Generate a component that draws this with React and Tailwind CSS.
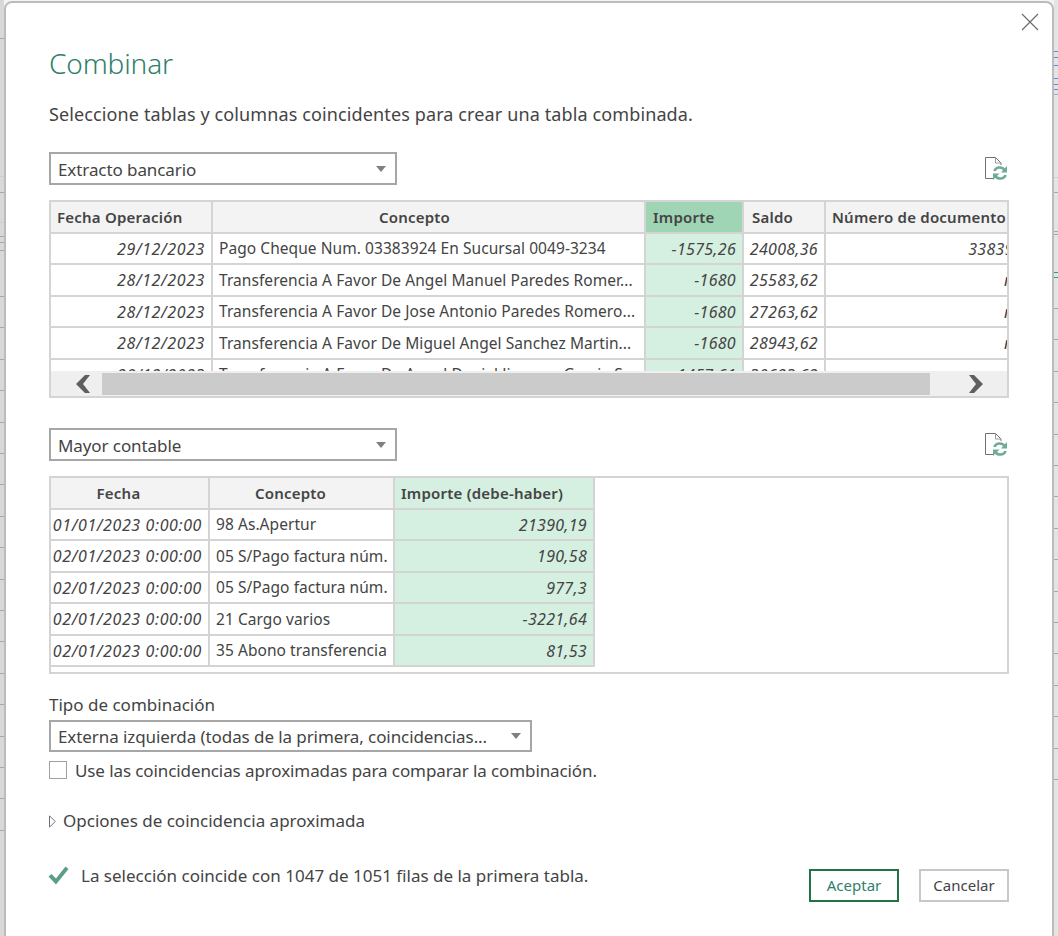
const table1 = {
  cols: 'grid-cols-[160px_431px_96px_80px_212px]',
  headPad: 'pr-[34px]',
  head: ['Fecha Operación', 'Concepto', 'Importe', 'Saldo', 'Número de documento'],
  headAlign: ['justify-start', 'justify-center', 'justify-start pl-[7px]', 'justify-start pl-[8px]', 'justify-start'],
  rows: [
    ['29/12/2023', 'Pago Cheque Num. 03383924 En Sucursal 0049-3234', '-1575,26', '24008,36', '3383924'],
    ['28/12/2023', 'Transferencia A Favor De Angel Manuel Paredes Romer...', '-1680', '25583,62', 'null'],
    ['28/12/2023', 'Transferencia A Favor De Jose Antonio Paredes Romero...', '-1680', '27263,62', 'null'],
    ['28/12/2023', 'Transferencia A Favor De Miguel Angel Sanchez Martin...', '-1680', '28943,62', 'null'],
    ['28/12/2023', 'Transferencia A Favor De Angel Daniel Jimenez Garcia S', '-1457,61', '30623,62', 'null'],
  ],
}

const table2 = {
  cols: 'grid-cols-[157px_183px_198px]',
  headPad: 'pr-[28px]',
  head: ['Fecha', 'Concepto', 'Importe (debe-haber)'],
  headAlign: ['justify-center', 'justify-center', 'justify-start'],
  rows: [
    ['01/01/2023 0:00:00', '98 As.Apertur', '21390,19'],
    ['02/01/2023 0:00:00', '05 S/Pago factura núm.', '190,58'],
    ['02/01/2023 0:00:00', '05 S/Pago factura núm.', '977,3'],
    ['02/01/2023 0:00:00', '21 Cargo varios', '-3221,64'],
    ['02/01/2023 0:00:00', '35 Abono transferencia', '81,53'],
  ],
}

// the spreadsheet that shows behind the dialog, only a sliver on each side
const gray = 'border-[#a8a8a8]'
const blue = 'border-[#5b8fc7]'
const leftLines = [
  [39, gray], [138, 'border-[#cccccc]'], [16, gray], [30, 'border-[#d0d0d0]'], [14, gray], [6, gray], [8, gray], [46, gray],
  [31, gray], [32, gray], [31, gray], [32, gray], [31, gray], [31, gray], [32, gray], [31, gray], [32, gray], [31, gray], [31, gray], [32, gray], [31, gray], [32, gray], [31, gray], [31, gray], [32, gray],
]
const rightLines = [
  [52, blue], [6, blue], [8, blue], [13, blue], [6, blue], [5, blue], [5, gray], [83, 'border-[#d0d0d0]'], [15, gray], [39, gray], [3, gray], [38, 'border-[#1fa08c]'], [5, 'border-[#1fa08c]'],
  [31, gray], [31, gray], [32, gray], [31, gray], [32, gray], [31, gray], [31, gray], [32, gray], [31, gray], [32, gray], [31, gray], [31, gray], [32, gray], [31, gray], [32, gray], [31, gray],
]

function Strip({ lines, className }) {
  return (
    <div className={`flex w-[4px] shrink-0 flex-col ${className}`}>
      {lines.map(([h, color], i) => (
        <div key={i} className={`shrink-0 border-b ${color}`} style={{ height: h }} />
      ))}
    </div>
  )
}

function Dropdown({ label, className }) {
  return (
    <div className={`flex items-center justify-between border-2 border-[#a6a6a6] bg-white pl-[7px] pr-[9px] ${className}`}>
      <span className="whitespace-nowrap pt-[2px] text-[17px] tracking-[-0.005em]">{label}</span>
      <span className="h-0 w-0 border-x-[5px] border-t-[6px] border-x-transparent border-t-[#808080]" />
    </div>
  )
}

function RefreshFile() {
  return (
    <svg width="24" height="26" viewBox="0 0 24 26" fill="none" className="mr-[1px]">
      <path d="M9 22.5H1.5V1.5H11.5L17 7V9" stroke="#707070" strokeWidth="1" />
      <path d="M11.5 1.5V7H17" stroke="#9a9a9a" strokeWidth="1" />
      <path d="M10.5 15C11.5 11 18 10 20.5 14" stroke="#6fab96" strokeWidth="2.6" />
      <path d="M23 10V16.5H17Z" fill="#6fab96" />
      <path d="M21.5 19C20.5 23 14 24 11.5 20" stroke="#6fab96" strokeWidth="2.6" />
      <path d="M9 24V17.5H15.5Z" fill="#6fab96" />
    </svg>
  )
}

function cellType(i) {
  if (i === 0) return 'justify-end text-[16px] italic tracking-[0.6px]'
  if (i === 1) return 'justify-start text-[15.5px] tracking-[0.06px]'
  return 'justify-end text-[16px] italic tracking-[0.3px]'
}

function DataTable({ data, selected, selectedHead, scroll }) {
  return (
    <div className="relative mt-[15px] h-[198px] overflow-hidden border-2 border-[#d4d4d4] bg-white">
      <div className={`grid w-fit auto-rows-[29.5px] gap-[2px] bg-[#d4d4d4] pb-[2px] ${data.cols} ${scroll ? '' : 'pr-[2px]'}`}>
        {data.head.map((h, i) => (
          <div
            key={h}
            className={`flex items-center whitespace-nowrap px-[6px] text-[15px] font-semibold tracking-[0.22px] ${data.headAlign[i]} ${data.headAlign[i] === 'justify-center' ? data.headPad : ''} ${i === selected ? selectedHead : 'bg-[#f3f3f3]'}`}
          >
            {h}
          </div>
        ))}
        {data.rows.map((row, r) =>
          row.map((c, i) => (
            <div
              key={r + '-' + i}
              className={`flex items-center overflow-hidden whitespace-nowrap px-[6px] pt-[1px] ${i === selected ? 'bg-[#d5efe1]' : 'bg-white'} ${cellType(i)}`}
            >
              {c}
            </div>
          )),
        )}
      </div>
      {scroll && (
        <div className="absolute inset-x-0 bottom-0 flex h-[25px] items-center bg-[#efefef] py-[2px]">
          <div className="flex w-[51px] justify-end pr-[11px]">
            <svg width="15" height="18" viewBox="0 0 15 18"><path d="M9 0H14L7 9L14 18H9L0 9Z" fill="#5f5f5f" /></svg>
          </div>
          <div className="h-[22px] w-[828px] bg-[#cbcbcb]" />
          <div className="flex flex-1 pl-[38px]">
            <svg width="15" height="18" viewBox="0 0 15 18"><path d="M1 0H6L15 9L6 18H1L8 9Z" fill="#5f5f5f" /></svg>
          </div>
        </div>
      )}
    </div>
  )
}

export default function App() {
  return (
    <div className="flex h-[936px] w-[1058px] overflow-hidden bg-[#f4f4f4] font-['Noto_Sans','Open_Sans',sans-serif] text-[#444444]">
      <Strip lines={leftLines} className="bg-[#d8d8d8]" />
      <div className="relative mt-[1px] h-[960px] w-[1050px] shrink-0 rounded-lg border-2 border-[#bcbcbc] bg-white px-[43px]">
        <button className="absolute right-[13px] top-[10px]">
          <svg width="18" height="18" viewBox="0 0 18 18" stroke="#6a6a6a" strokeWidth="1.1">
            <path d="M1 1L17 17M17 1L1 17" />
          </svg>
        </button>

        <h1 className="mt-[40px] text-[28px] font-light leading-[40px] text-[#2f7f6c] tracking-[-0.005em]">Combinar</h1>
        <p className="mt-[17px] text-[18px] leading-[28px] tracking-[0.12px]">
          Seleccione tablas y columnas coincidentes para crear una tabla combinada.
        </p>

        <div className="mt-[24px] flex h-[33px] items-center justify-between">
          <Dropdown label="Extracto bancario" className="h-full w-[348px]" />
          <RefreshFile />
        </div>
        <DataTable data={table1} selected={2} selectedHead="bg-[#9fd5b5]" scroll />

        <div className="mt-[30px] flex h-[33px] items-center justify-between">
          <Dropdown label="Mayor contable" className="h-full w-[348px]" />
          <RefreshFile />
        </div>
        <DataTable data={table2} selected={2} selectedHead="bg-[#d5efe1]" />

        <div className="mt-[19px] text-[17px] leading-[24px]">Tipo de combinación</div>
        <Dropdown
          label="Externa izquierda (todas de la primera, coincidencias..."
          className="mt-[3px] h-[32px] w-[483px]"
        />

        <label className="mt-[9px] flex h-[18px] items-center gap-[8px] text-[17px] tracking-[-0.1px]">
          <span className="h-[18px] w-[18px] border border-[#a0a0a0]" />
          <span className="pt-[2px]">Use las coincidencias aproximadas para comparar la combinación.</span>
        </label>

        <div className="mt-[30px] flex h-[24px] items-center gap-[7px] text-[17px]">
          <svg width="7" height="13" viewBox="0 0 7 13" fill="none" stroke="#707070">
            <path d="M0.5 0.8L6.2 6.5L0.5 12.2Z" />
          </svg>
          Opciones de coincidencia aproximada
        </div>

        <div className="mt-[31px] flex items-start justify-between">
          <div className="flex h-[22px] items-center gap-[12px] text-[17px]">
            <svg width="21" height="19" viewBox="0 0 21 19" className="-ml-[1px]">
              <path d="M0.5 10.5L3.5 8L8 12.5L17.5 0.5L20.5 3L8 18.5Z" fill="#5a9e87" />
            </svg>
            <span className="pt-[2px]">La selección coincide con 1047 de 1051 filas de la primera tabla.</span>
          </div>
          <div className="mt-[5px] flex gap-[20px] text-[15px]">
            <button className="h-[33px] w-[90px] border-2 border-[#217346] text-[#2f7f6c]">Aceptar</button>
            <button className="h-[33px] w-[90px] border-2 border-[#c8c8c8]">Cancelar</button>
          </div>
        </div>
      </div>
      <Strip lines={rightLines} className="bg-[#e4e4e4]" />
    </div>
  )
}
